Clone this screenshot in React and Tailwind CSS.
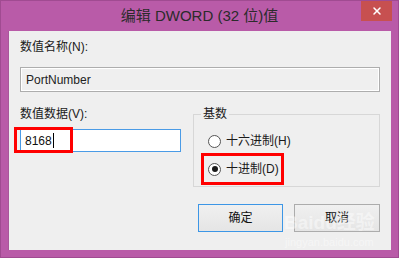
import { X } from 'lucide-react'

const font = { fontFamily: '"Liberation Sans", "Noto Sans CJK SC", sans-serif' }

const Radio = ({ checked, label }) => (
  <div className="flex items-center h-[16px]">
    <span className="w-[13px] h-[13px] rounded-full border border-[#555] bg-white flex items-center justify-center">
      {checked && <span className="w-[6px] h-[6px] rounded-full bg-[#1a1a1a]" />}
    </span>
    <span className="ml-[5px] text-[12px] text-[#1a1a1a] leading-[16px]">{label}</span>
  </div>
)

export default function App() {
  return (
    <div
      className="relative w-[399px] h-[258px] bg-[#b95ba8] border border-[#a04b91] flex flex-col overflow-hidden"
      style={font}
    >
      {/* title bar */}
      <div className="h-[30px] flex items-center justify-center">
        <span className="text-[15px] text-[#2b2b2b] pt-[1px]">编辑 DWORD (32 位)值</span>
      </div>
      <button className="absolute top-0 right-[6px] w-[31px] h-[20px] bg-[#c75050] flex items-center justify-center">
        <X size={12} strokeWidth={3} className="text-white" />
      </button>

      {/* body */}
      <div className="mx-[7px] h-[219px] bg-[#efefef] border-l border-[#a9579b] flex flex-col px-[11px] pt-[8px]">
        <div className="text-[12px] leading-[16px] text-[#1a1a1a]">数值名称(N):</div>
        <div className="mt-[12px] h-[25px] border border-[#adadad] flex">
          <div className="flex-1 border border-white flex items-center pl-[4px] text-[12px] text-[#222]">
            PortNumber
          </div>
        </div>

        <div className="mt-[14px] flex gap-[12px] items-start">
          <div className="w-[161px] flex flex-col">
            <div className="text-[12px] leading-[16px] text-[#1a1a1a]">数值数据(V):</div>
            <div className="relative mt-[7px] h-[23px] border border-[#4a9be6] bg-white flex items-center pl-[4px] text-[12px] text-[#111]">
              <span>8168</span>
              <span className="ml-[1px] w-[1px] h-[15px] bg-black" />
              <div className="absolute left-[-7px] top-[-3px] w-[59px] h-[26px] border-[3px] border-[#ff0000]" />
            </div>
          </div>

          <fieldset className="flex-1 border border-[#d7d7d7] pb-[1px]">
            <legend className="ml-[7px] px-[2px] text-[12px] leading-[16px] text-[#1a1a1a]">基数</legend>
            <div className="mt-[11px] pl-[14px]">
              <Radio label="十六进制(H)" />
            </div>
            <div className="mt-[4px] ml-[7px] w-[83px] h-[32px] border-[3px] border-[#ff0000] pl-[4px] pt-[5px]">
              <Radio checked label="十进制(D)" />
            </div>
          </fieldset>
        </div>

        <div className="mt-[17px] flex justify-end gap-[11px]">
          <button className="w-[85px] h-[28px] border border-[#3c96e6] bg-gradient-to-b from-[#f0f0f0] to-[#e5e5e5] text-[12px] text-[#111]">
            确定
          </button>
          <button className="w-[86px] h-[28px] border border-[#acacac] bg-gradient-to-b from-[#f0f0f0] to-[#e5e5e5] text-[12px] text-[#111]">
            取消
          </button>
        </div>
      </div>

      {/* watermark */}
      <div className="absolute left-[283px] top-[212px] flex flex-col items-center text-white opacity-45 pointer-events-none">
        <span className="text-[19px] font-bold leading-[20px]">Baidu经验</span>
        <span className="text-[11px] leading-[14px] mt-[2px]">jingyan.baidu.com</span>
      </div>
    </div>
  )
}
